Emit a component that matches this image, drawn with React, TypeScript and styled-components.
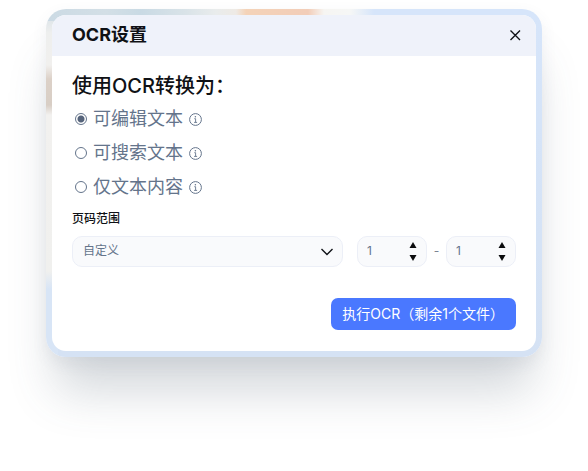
import { useState } from "react";
import styled, { createGlobalStyle } from "styled-components";

const GlobalStyle = createGlobalStyle`
  *, *::before, *::after { box-sizing: border-box; }
  body {
    margin: 0;
    background: #fff;
    color: #0f1115;
    font-family: Inter, "Noto Sans CJK SC", "Noto Sans", sans-serif;
  }
  button, input, select { font: inherit; color: inherit; margin: 0; }
  button { border: 0; padding: 0; background: none; cursor: pointer; }
`;

const Page = styled.main`
  min-height: 100vh;
  padding: 9px 46px 48px;
`;

const Frame = styled.div`
  padding: 6px;
  border-radius: 20px;
  background:
    linear-gradient(90deg, #cbdae4 0, #d3dfe6 60px, #c9dae4 95px, #d9e3e8 140px, #e9ecec 170px, #eeeae5 190px, #f4d3b8 200px, #f2cdb8 262px, #f6f5f2 278px, #f6f7f6 304px, #d6e5fa 328px) top / 100% 12px no-repeat,
    linear-gradient(180deg, #d3dee6 0, #eeefee 24px, #f1f0ee 56px, #dcd1c8 70px, #d8cec5 96px, #f2f1ef 106px, #f0f0ee 262px, #d8e5f6 280px) left / 12px 100% no-repeat,
    linear-gradient(180deg, #d6e5fa, #d5e2f4);
  box-shadow:
    0 6px 16px rgba(75, 88, 115, 0.08),
    0 44px 48px -10px rgba(70, 85, 105, 0.23);
`;

const Dialog = styled.section`
  overflow: hidden;
  border-radius: 14px;
  background: #fff;
`;

const Header = styled.header`
  display: flex;
  align-items: center;
  justify-content: space-between;
  height: 41px;
  padding: 0 14px 2px 20px;
  background: #eff2fa;
`;

const Title = styled.h1`
  margin: 0;
  font-size: 18px;
  line-height: 24px;
  font-weight: 700;
`;

const CloseButton = styled.button`
  display: grid;
  place-items: center;
  width: 14px;
  height: 14px;
`;

const Body = styled.form`
  display: flex;
  flex-direction: column;
  padding: 14px 20px 21px;
`;

const Options = styled.fieldset`
  margin: 0;
  padding: 0;
  border: 0;
`;

const Legend = styled.legend`
  padding: 0;
  font-size: 20px;
  line-height: 32px;
  font-weight: 500;
`;

const OptionRow = styled.div`
  display: flex;
  align-items: center;
  height: 34px;
  padding-left: 3px;
  color: #64748b;
`;

const OptionLabel = styled.label`
  display: flex;
  align-items: center;
  gap: 6px;
  font-size: 18px;
  line-height: 24px;
`;

const Radio = styled.input`
  appearance: none;
  width: 12px;
  height: 12px;
  border: 1px solid #64748b;
  border-radius: 50%;
  background: #fff;

  &:checked {
    background: radial-gradient(circle, #56647b 3px, #fff 4px);
  }
`;

const InfoButton = styled.button`
  display: grid;
  place-items: center;
  width: 13px;
  height: 13px;
  margin-left: 6px;
`;

const RangeLabel = styled.label`
  align-self: flex-start;
  margin-top: 6px;
  font-size: 12px;
  line-height: 18px;
  font-weight: 500;
`;

const RangeRow = styled.div`
  display: flex;
  align-items: center;
  margin-top: 8px;
`;

const Field = styled.div`
  display: flex;
  align-items: center;
  height: 31px;
  border: 1px solid #eceff7;
  border-radius: 10px;
  background: #f9fafc;
  color: #64748b;
  font-size: 12px;
`;

const SelectField = styled(Field)`
  position: relative;
  flex: 1;
  margin-right: 14px;
`;

const Select = styled.select`
  appearance: none;
  width: 100%;
  height: 100%;
  padding: 0 32px 2px 10px;
  border: 0;
  border-radius: 10px;
  background: none;
  line-height: 18px;
`;

const Chevron = styled.svg`
  position: absolute;
  right: 8px;
  top: 11px;
  pointer-events: none;
`;

const NumberField = styled(Field)`
  width: 70px;
  padding: 0 9px;
`;

const NumberInput = styled.input`
  appearance: textfield;
  flex: 1;
  min-width: 0;
  height: 100%;
  padding: 0 0 2px;
  border: 0;
  outline: 0;
  background: none;

  &::-webkit-inner-spin-button,
  &::-webkit-outer-spin-button {
    appearance: none;
    margin: 0;
  }
`;

const Stepper = styled.div`
  display: flex;
  flex-direction: column;
  gap: 7px;
  color: #0b0c0e;
`;

const StepButton = styled.button`
  display: block;
  width: 8px;
  height: 6px;
  line-height: 0;
`;

const Dash = styled.span`
  width: 19px;
  padding-bottom: 2px;
  text-align: center;
  color: #7b8494;
  font-size: 12px;
  line-height: 18px;
`;

const SubmitButton = styled.button`
  align-self: flex-end;
  height: 32px;
  margin-top: 31px;
  padding: 0 12px 0 11px;
  border-radius: 7px;
  background: #4a78ff;
  color: #fff;
  font-size: 14px;
  line-height: 20px;
`;

const options = ["可编辑文本", "可搜索文本", "仅文本内容"];

function InfoIcon() {
  return (
    <svg width="13" height="13" viewBox="0 0 13 13" fill="none" stroke="currentColor" aria-hidden="true">
      <circle cx="6.5" cy="6.5" r="5.9" />
      <path d="M5.3 5.7h1.3v3.6M5.1 9.4h3" strokeWidth="0.9" />
      <circle cx="6.4" cy="3.7" r="0.75" fill="currentColor" stroke="none" />
    </svg>
  );
}

type PageNumberProps = { label: string };

function PageNumber({ label }: PageNumberProps) {
  const [value, setValue] = useState(1);
  return (
    <NumberField>
      <NumberInput
        type="number"
        min={1}
        aria-label={label}
        value={value}
        onChange={(e) => setValue(Number(e.target.value))}
      />
      <Stepper>
        <StepButton type="button" aria-label="增加" onClick={() => setValue(value + 1)}>
          <svg width="8" height="6" viewBox="0 0 8 6" fill="currentColor">
            <path d="M4 0 7.5 6h-7z" />
          </svg>
        </StepButton>
        <StepButton type="button" aria-label="减少" onClick={() => setValue(Math.max(1, value - 1))}>
          <svg width="8" height="6" viewBox="0 0 8 6" fill="currentColor">
            <path d="M4 6 .5 0h7z" />
          </svg>
        </StepButton>
      </Stepper>
    </NumberField>
  );
}

export default function App() {
  const [mode, setMode] = useState(options[0]);
  return (
    <Page>
      <GlobalStyle />
      <Frame>
        <Dialog role="dialog" aria-labelledby="ocr-title">
          <Header>
            <Title id="ocr-title">OCR设置</Title>
            <CloseButton type="button" aria-label="关闭">
              <svg width="12" height="12" viewBox="0 0 12 12" fill="none" stroke="#111318" strokeWidth="1.4">
                <path d="m1.500 1.500 9.500 9.500M11 1.500 1.500 11" />
              </svg>
            </CloseButton>
          </Header>
          <Body onSubmit={(e) => e.preventDefault()}>
            <Options>
              <Legend>使用OCR转换为：</Legend>
              {options.map((option) => (
                <OptionRow key={option}>
                  <OptionLabel>
                    <Radio
                      type="radio"
                      name="mode"
                      checked={mode === option}
                      onChange={() => setMode(option)}
                    />
                    {option}
                  </OptionLabel>
                  <InfoButton type="button" aria-label={`${option}说明`}>
                    <InfoIcon />
                  </InfoButton>
                </OptionRow>
              ))}
            </Options>
            <RangeLabel htmlFor="range">页码范围</RangeLabel>
            <RangeRow>
              <SelectField>
                <Select id="range" defaultValue="custom">
                  <option value="custom">自定义</option>
                </Select>
                <Chevron width="14" height="8" viewBox="0 0 14 8" fill="none" stroke="#111318" strokeWidth="1.4">
                  <path d="m1.500 1 5.500 5.500L12.500 1" />
                </Chevron>
              </SelectField>
              <PageNumber label="起始页" />
              <Dash>-</Dash>
              <PageNumber label="结束页" />
            </RangeRow>
            <SubmitButton type="submit">执行OCR（剩余1个文件）</SubmitButton>
          </Body>
        </Dialog>
      </Frame>
    </Page>
  );
}
